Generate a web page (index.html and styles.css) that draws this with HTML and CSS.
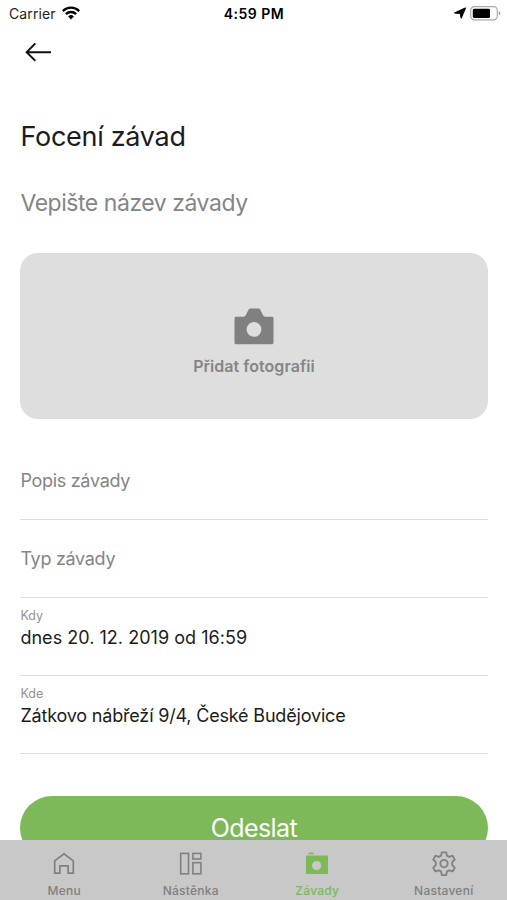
FILE: index.html
```html
<!DOCTYPE html>
<html lang="cs">
<head>
<meta charset="utf-8">
<title>Focení závad</title>
<link rel="stylesheet" href="styles.css">
</head>
<body>
<div class="screen">
  <header class="status">
    <div class="status-left">
      <span class="carrier">Carrier</span>
      <svg class="wifi" viewBox="0 0 18 14" width="18" height="14"><g fill="none" stroke="#000" stroke-width="2.3"><path d="M.8 5.1a11.6 11.6 0 0 1 16.4 0"/><path d="M3.9 8.1a7.2 7.2 0 0 1 10.2 0"/></g><path d="M9 13.4 6.1 10.5a4.1 4.1 0 0 1 5.8 0z"/></svg>
    </div>
    <span class="time">4:59 PM</span>
    <div class="status-right">
      <svg viewBox="0 0 12 12" width="12" height="12"><path d="M11.4 1 7.200 11 6.300 6.500.6 6z" stroke="#000" stroke-width="1.200" stroke-linejoin="round"/></svg>
      <svg viewBox="0 0 31 15" width="31" height="15"><rect x=".7" y=".7" width="26.6" height="13.1" rx="3.6" fill="#fff" stroke="#aaa" stroke-width="1.2"/><rect x="2.8" y="2.7" width="17.2" height="9.2" rx="1.4"/><path d="M28.8 5.2c2 .6 2 3.6 0 4.2z" fill="#999"/></svg>
    </div>
  </header>
  <nav class="back"><svg viewBox="0 0 28 20" width="28" height="20"><path d="M26 10.300H2M10.300 1.400 1.600 10.300l8.700 8.400" fill="none" stroke="#111" stroke-width="1.900"/></svg></nav>
  <main class="form">
    <h1 class="title"><span>Focení závad</span></h1>
    <p class="name"><span>Vepište název závady</span></p>
    <div class="photo">
      <svg viewBox="0 0 40 37" width="40" height="37"><path fill="#808080" fill-rule="evenodd" d="M2 8.7h7.7c1.4 0 2.1-1.300 2.900-3.100l1.800-3.700C15 .9 15.700.600 16.600.600h7.700c.9 0 1.700.4 2.100 1.300l1.800 3.700c.8 1.800 1.500 3.100 2.900 3.100H37.500c1.400 0 2 .6 2 2v23.600c0 1.400-.6 2-2 2H2.500c-1.400 0-2-.6-2-2V10.700c0-1.400.5-2 1.500-2zM20 14a7.400 7.400 0 1 0 0 14.800 7.400 7.400 0 0 0 0-14.800z"/></svg>
      <span class="photo-label">Přidat fotografii</span>
    </div>
    <div class="field empty"><span>Popis závady</span></div>
    <div class="field empty"><span>Typ závady</span></div>
    <div class="field"><label>Kdy</label><span class="date">dnes 20. 12. 2019 od 16:59</span></div>
    <div class="field"><label>Kde</label><span class="place">Zátkovo nábřeží 9/4, České Budějovice</span></div>
    <button class="submit"><span>Odeslat</span></button>
  </main>
  <nav class="tabs">
    <div class="tab"><svg viewBox="0 0 26 26" width="26" height="26"><path d="M3.700 22.200V9.900L13 2.800l9.300 7.100v12.300h-5.200v-7.300H8.900v7.300z" fill="none" stroke="#808080" stroke-width="1.700"/></svg><span>Menu</span></div>
    <div class="tab"><svg viewBox="0 0 26 26" width="26" height="26"><g fill="none" stroke="#808080" stroke-width="1.600"><rect x="2.700" y="2.400" width="7.800" height="20.400"/><rect x="14.900" y="2.400" width="8" height="5.600"/><rect x="14.900" y="11.700" width="8" height="11.100"/></g></svg><span>Nástěnka</span></div>
    <div class="tab active"><svg viewBox="0 0 26 26" width="26" height="26"><path fill="#7db959" fill-rule="evenodd" d="M2 4.500h22V23H2zM12.600 10a4.600 4.600 0 1 0 0 9.200 4.600 4.600 0 0 0 0-9.200z"/><path d="m4 3.200 1.300-1.700h3.600l1.200 1.700z" fill="#7db959"/></svg><span>Závady</span></div>
    <div class="tab"><svg viewBox="0 0 26 26" width="26" height="26"><g fill="none" stroke="#808080" stroke-width="1.800" stroke-linejoin="round"><path d="M10.800 1.300h4.400l.7 3.300 2.300 1.300 3.400-1.200 2.200 3.900-2.600 2.400v3.200l2.600 2.400-2.200 3.900-3.400-1.200-2.300 1.300-.7 3.600h-4.400l-.7-3.600-2.300-1.300-3.400 1.200-2.200-3.900 2.600-2.400V11L2.200 8.600l2.200-3.900 3.400 1.200 2.300-1.300z"/><circle cx="13" cy="12.600" r="3.700"/></g></svg><span>Nastavení</span></div>
  </nav>
</div>
</body>
</html>
```
FILE: styles.css
```css
* { box-sizing: border-box; }
body { margin: 0; background: #fff; font-family: Inter, "Liberation Sans", sans-serif; color: #1c1c1c; }
.screen { height: 900px; overflow: hidden; display: flex; flex-direction: column; }
svg { display: block; flex: none; }
span, label { white-space: nowrap; }

.status { height: 28px; flex: none; display: grid; grid-template-columns: 1fr auto 1fr; align-items: center; padding: 0 6px 2px 9px; color: #000; line-height: 18px; }
.status-left, .status-right { display: flex; align-items: center; gap: 6px; }
.status-right { justify-content: flex-end; gap: 4px; }
.carrier { font-size: 14px; letter-spacing: .1px; padding-top: 1px; color: #222; }
.time { font-size: 14px; font-weight: 600; letter-spacing: .5px; padding-top: 1px; margin-left: -2px; }

.back { flex: none; height: 82px; padding: 14px 0 0 25px; }

.form { flex: 1; min-height: 0; overflow: hidden; display: flex; flex-direction: column; padding: 0 19.500px 0 20.400px; }
.title { flex: none; margin: 0; height: 52px; line-height: 54px; font-size: 27px; font-weight: 400; letter-spacing: -.28px; }
.name { flex: none; margin: 0; height: 91px; line-height: 82px; font-size: 23px; letter-spacing: -.46px; color: #858585; }
.photo { flex: none; height: 166px; border-radius: 18px; background: #dedede; display: flex; flex-direction: column; align-items: center; padding-top: 55px; gap: 11px; margin-bottom: 23px; }
.photo-label { font-size: 16px; line-height: 20px; font-weight: 600; color: #858585; letter-spacing: .05px; }

.field { flex: none; height: 78px; border-bottom: 1px solid #dedede; display: flex; flex-direction: column; align-items: flex-start; padding-top: 9px; font-size: 18px; line-height: 26px; }
.field label { font-size: 12.500px; line-height: 18px; color: #929292; }
.field.empty { padding-top: 26px; color: #858585; letter-spacing: -.3px; }
.date { letter-spacing: .03px; }
.place { letter-spacing: -.18px; }

.submit { flex: none; height: 64px; margin: 42px 0 0; border: 0; border-radius: 32px; background: #7db959; color: #fff; font: 400 25px/64px Inter, sans-serif; letter-spacing: -.55px; padding: 0; }

.tabs { flex: none; height: 60px; background: #c8c8c8; display: grid; grid-template-columns: repeat(4, 126.500px); padding-left: 1px; }
.tab { display: flex; flex-direction: column; align-items: center; padding-top: 11px; gap: 6px; font-size: 12px; line-height: 16px; font-weight: 500; letter-spacing: .25px; color: #808080; }
.tab.active { color: #7db959; }
```
